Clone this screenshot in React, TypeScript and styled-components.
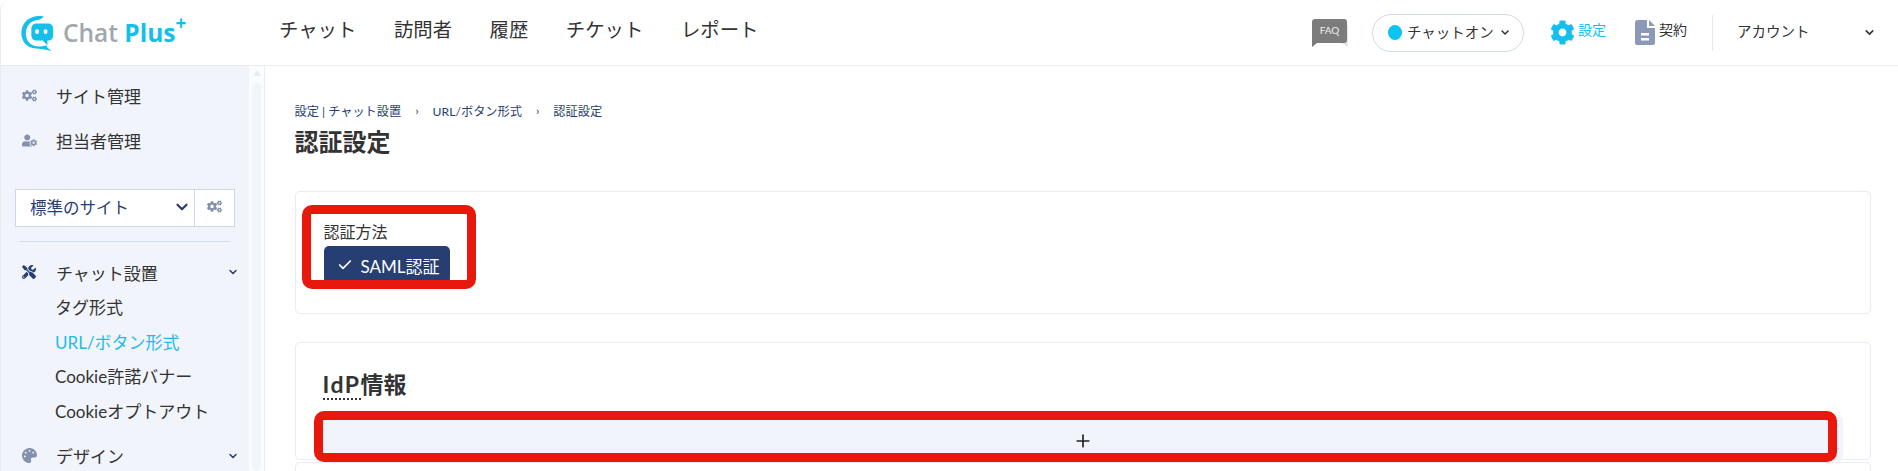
import React from "react";
import styled, { createGlobalStyle } from "styled-components";
import { ChevronDown, Check, Plus } from "lucide-react";
import { FaCog, FaCogs, FaUserCog, FaTools, FaPalette } from "react-icons/fa";

const Global = createGlobalStyle`
  html, body { margin: 0; padding: 0; background: #fff; overflow: hidden; }
  body { font-family: Lato, "Noto Sans CJK JP", sans-serif; color: #333; }
  * { box-sizing: border-box; }
`;

const Page = styled.div`
  width: 1898px; height: 471px; overflow: hidden; display: flex; flex-direction: column;
  border-left: 1px solid #e9ecf4; border-top-left-radius: 10px; background: #fff;
`;
const Header = styled.header`
  height: 66px; flex: none; display: flex; align-items: center; border-bottom: 1px solid #e8ebf3;
`;
const Logo = styled.div`
  width: 278px; padding-left: 19px; display: flex; align-items: center; gap: 8px; flex: none;
`;
const LogoText = styled.span`
  font: 600 24.500px/1 "Open Sans", sans-serif; color: #9fa8ad; white-space: pre; position: relative; top: 1px;
  b { color: #14c0ea; font-weight: 700; }
  sup { color: #14c0ea; font-size: 19px; font-weight: 700; line-height: 0; position: relative; top: -3px; vertical-align: super; }
`;
const Nav = styled.nav`
  display: flex; gap: 37.500px; font-size: 19.400px; color: #333; padding-bottom: 8px;
`;
const Right = styled.div`
  margin-left: auto; display: flex; align-items: center; height: 36px; padding-right: 22px;
`;
const ChatPill = styled.div`
  width: 152px; height: 38px; margin-left: 24px; border: 1px solid #cfdaec; border-radius: 19px; display: flex; align-items: center;
  padding: 0 12px 0 15px; font-size: 14.500px; gap: 5px; color: #333; white-space: nowrap;
  svg { margin-left: auto; }
`;
const PillText = styled.span`
  padding-bottom: 2px;
`;
const Dot = styled.span`
  width: 14px; height: 15px; border-radius: 50%; background: #0cc4f0; flex: none;
`;
const HeadLink = styled.div<{ $on?: boolean }>`
  display: flex; align-items: center; gap: ${(p) => (p.$on ? "3px" : "4px")}; font-size: 14px; color: ${(p) => (p.$on ? "#14bff0" : "#333")}; margin-left: ${(p) => (p.$on ? "26px" : "29px")};
`;
const HeadLabel = styled.span`
  padding-bottom: 7px;
`;
const Divider = styled.div`
  width: 1px; height: 36px; background: #e3e8f2; margin-left: 25px;
`;
const Account = styled.div`
  width: 139px; margin-left: 24px; display: flex; justify-content: space-between; align-items: center; font-size: 14.500px;
`;
const AccountLabel = styled.span`
  padding-bottom: 4px;
`;
const Body = styled.div`
  flex: 1; display: flex; min-height: 0;
`;
const Side = styled.aside`
  width: 248px; flex: none; background: #f1f4fa; overflow: hidden;
`;
const SideTop = styled.div`
  padding-top: 7px;
`;
const Item = styled.div<{ $h?: number }>`
  height: ${(p) => p.$h ?? 45}px; display: flex; align-items: center; padding-left: 21px; font-size: 17px; color: #333;
  i { width: 34px; flex: none; display: flex; font-style: normal; }
`;
const ItemChev = styled.span`
  margin-left: auto; margin-right: 10px; display: flex;
`;
const SitePicker = styled.div`
  display: flex; width: 220px; height: 38px; margin: 26px 0 0 14px; background: #fff; border: 1px solid #cbd8ec;
`;
const SiteName = styled.div`
  flex: 1; display: flex; align-items: center; justify-content: space-between; padding: 0 3px 2px 14px; font-size: 16.500px; color: #2a3f6f; border-right: 1px solid #cbd8ec;
`;
const SiteGear = styled.div`
  width: 39px; flex: none; display: flex; align-items: center; justify-content: center; padding-bottom: 4px;
`;
const Rule = styled.div`
  width: 210px; height: 1px; background: #cfdaec; margin: 14px 0 12px 19px;
`;
const SubList = styled.div`
  padding-left: 54px; display: flex; flex-direction: column; margin-top: -1px;
`;
const Sub = styled.div<{ $on?: boolean }>`
  height: 34.700px; display: flex; align-items: center; font-size: 17px; color: ${(p) => (p.$on ? "#1fbcea" : "#333")};
`;
const Track = styled.div`
  width: 15px; flex: none; background: #fbfcfe; position: relative;
  &::before { content: ""; position: absolute; left: 3.500px; top: 4px; border: 4px solid transparent; border-top: 0; border-bottom: 6px solid #e8ecf5; }
  &::after { content: ""; position: absolute; left: 3px; right: 3px; top: 17px; bottom: 0; background: #f1f4fa; border-radius: 5px; }
`;
const Main = styled.main`
  flex: 1; border-left: 1px solid #e8ebf3; padding: 36px 27px 0 29.500px; min-width: 0; position: relative;
`;
const Crumbs = styled.div`
  display: flex; height: 17px; align-items: center; font-size: 12.200px; color: #2a3f6f; white-space: pre;
  span { margin: 0 14px; }
`;
const Title = styled.h1`
  margin: 8px 0 0; font-size: 24px; line-height: 30px; font-weight: 700; color: #333;
`;
const Card = styled.section<{ $h: number; $top: number }>`
  position: relative; height: ${(p) => p.$h}px; margin-top: ${(p) => p.$top}px; border: 1px solid #e8ebf3; border-radius: 5px; background: #fff;
`;
const CardOne = styled.div`
  padding: 29px 0 0 28px;
`;
const FieldLabel = styled.div`
  font-size: 16px; line-height: 22px; color: #333;
`;
const SamlBtn = styled.div`
  width: 126px; height: 38px; border-radius: 5px; background: #273e72; color: #fff; display: flex; align-items: center; padding-left: 13px; gap: 8px; font-size: 17px; margin-top: 3px;
`;
const CardTwo = styled.div`
  padding: 26px 27px 0;
`;
const CardHead = styled.h2`
  margin: 0; font-size: 23px; line-height: 30px; font-weight: 700; color: #333;
  abbr { text-decoration: none; border-bottom: 2px dotted #333; letter-spacing: 1.500px; }
`;
const AddBar = styled.div`
  height: 44px; margin-top: 18px; padding-top: 4px; background: #f1f4fa; display: flex; align-items: center; justify-content: center; color: #222; border-radius: 3px;
`;
const Highlight = styled.div<{ $l: number; $t: number; $w: number; $h: number }>`
  position: absolute; left: ${(p) => p.$l}px; top: ${(p) => p.$t}px; width: ${(p) => p.$w}px; height: ${(p) => p.$h}px;
  border: 9px solid #e8190c; border-radius: 10px; pointer-events: none;
`;

const ChatLogo = () => (
  <svg width="35" height="38" viewBox="0 0 37 38">
    <path d="M25 1.500C13 -1 2 6 1.500 18c-.5 10 6 17 15 17.500 5 .5 10 1 17 2.500-3-2-5-3.500-6-6-8 3-17 1-20-6C4 17 8 7 17 5.500c3-.5 6-1 8-4z" fill="#14c0ea"/>
    <path d="M17 9h13a5 5 0 0 1 5 5v8a5 5 0 0 1-5 5h-1v5l-5-5h-7a5 5 0 0 1-5-5v-8a5 5 0 0 1 5-5z" fill="#14c0ea"/>
    <rect x="16" y="15" width="4" height="5" rx="2" fill="#fff"/><rect x="25" y="15" width="4" height="5" rx="2" fill="#fff"/>
  </svg>
);
const Faq = () => (
  <svg width="36" height="28" viewBox="0 0 36 28">
    <path d="M29 24l7 4V6h-7z" fill="#e6e6df"/>
    <path d="M3 0h29a3 3 0 0 1 3 3v18a3 3 0 0 1-3 3H5l-5 4V3a3 3 0 0 1 3-3z" fill="#7c7c7c"/>
    <text x="17.500" y="15" textAnchor="middle" fontSize="10" fill="#eee" fontFamily="Lato, sans-serif">FAQ</text>
  </svg>
);
const Doc = () => (
  <svg width="20" height="25" viewBox="0 0 20 25">
    <path d="M3 0h9v8h8v15a2 2 0 0 1-2 2H2a2 2 0 0 1-2-2V3a3 3 0 0 1 3-3z" fill="#8c98b8"/>
    <path d="M14 0l6 6h-6z" fill="#8c98b8"/>
    <rect x="6" y="13" width="8" height="2.500" fill="#fff"/><rect x="6" y="18" width="8" height="2.500" fill="#fff"/>
  </svg>
);
const Chev = ({ c = "#2a3f6f", s = 14 }: { c?: string; s?: number }) => <ChevronDown size={s} color={c} strokeWidth={3} />;

export default function App() {
  return (
    <Page>
      <Global />
      <Header>
        <Logo>
          <ChatLogo />
          <LogoText>Chat <b>Plus</b><sup>+</sup></LogoText>
        </Logo>
        <Nav>
          <span>チャット</span><span>訪問者</span><span>履歴</span><span>チケット</span><span>レポート</span>
        </Nav>
        <Right>
          <Faq />
          <ChatPill><Dot /><PillText>チャットオン</PillText><Chev c="#333" s={13} /></ChatPill>
          <HeadLink $on><FaCog size={25} color="#14bff0" /><HeadLabel>設定</HeadLabel></HeadLink>
          <HeadLink><Doc /><HeadLabel>契約</HeadLabel></HeadLink>
          <Divider />
          <Account><AccountLabel>アカウント</AccountLabel><Chev c="#333" s={13} /></Account>
        </Right>
      </Header>
      <Body>
        <Side>
          <SideTop>
            <Item><i><FaCogs size={15} color="#8590ae" /></i>サイト管理</Item>
            <Item><i><FaUserCog size={15} color="#8590ae" /></i>担当者管理</Item>
          </SideTop>
          <SitePicker>
            <SiteName>標準のサイト<Chev s={18} /></SiteName>
            <SiteGear><FaCogs size={15} color="#8590ae" /></SiteGear>
          </SitePicker>
          <Rule />
          <Item $h={36}><i><FaTools size={14} color="#273e72" /></i>チャット設置<ItemChev><Chev s={12} /></ItemChev></Item>
          <SubList>
            <Sub>タグ形式</Sub>
            <Sub $on>URL/ボタン形式</Sub>
            <Sub>Cookie許諾バナー</Sub>
            <Sub>Cookieオプトアウト</Sub>
          </SubList>
          <Item $h={56}><i><FaPalette size={15} color="#8590ae" /></i>デザイン<ItemChev><Chev s={12} /></ItemChev></Item>
        </Side>
        <Track />
        <Main>
          <Crumbs>設定 | チャット設置<span>›</span>URL/ボタン形式<span>›</span>認証設定</Crumbs>
          <Title>認証設定</Title>
          <Card $h={123} $top={34}>
            <CardOne>
              <FieldLabel>認証方法</FieldLabel>
              <SamlBtn><Check size={16} strokeWidth={2.500} />SAML認証</SamlBtn>
            </CardOne>
            <Highlight $l={6} $t={13} $w={174} $h={84} />
          </Card>
          <Card $h={118} $top={28}>
            <CardTwo>
              <CardHead><abbr>IdP</abbr>情報</CardHead>
              <AddBar><Plus size={20} strokeWidth={2} /></AddBar>
            </CardTwo>
            <Highlight $l={18} $t={68} $w={1523} $h={51} />
          </Card>
          <Card $h={40} $top={2} />
        </Main>
      </Body>
    </Page>
  );
}
